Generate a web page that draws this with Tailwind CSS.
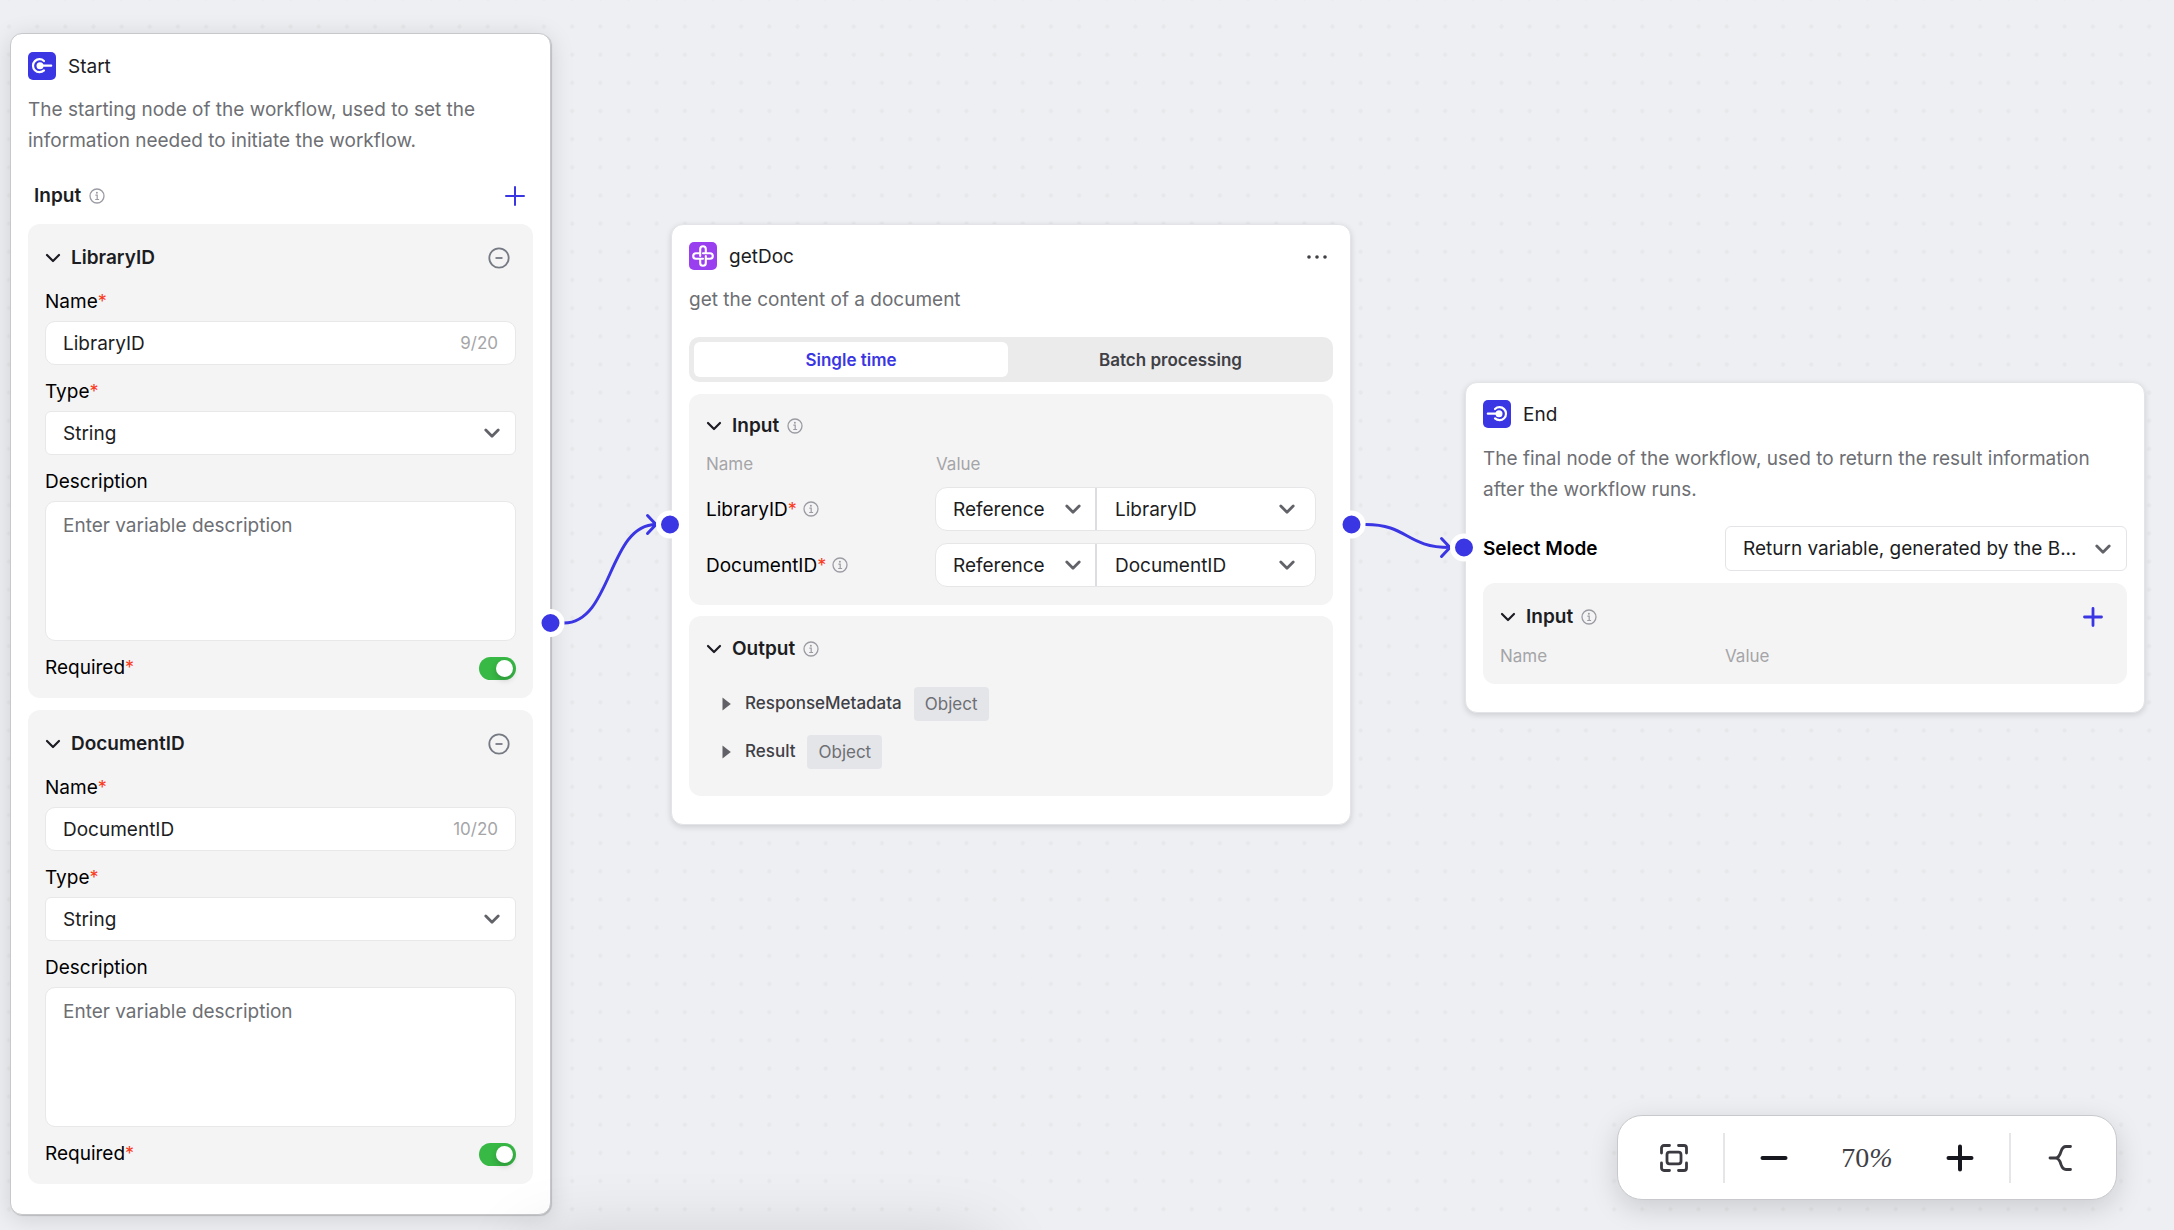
<!DOCTYPE html>
<html lang="en">
<head>
<meta charset="utf-8">
<meta name="viewport" content="width=device-width, initial-scale=1">
<title>Workflow editor</title>
<script src="https://cdn.jsdelivr.net/npm/@tailwindcss/browser@4"></script>
</head>
<body class="bg-[#eeeff3] font-['Inter',sans-serif] text-[19px] text-[#1c1d23]">

<svg class="hidden" aria-hidden="true">
  <symbol id="info" viewBox="0 0 16 16"><circle cx="8" cy="8" r="7" fill="none" stroke="#9b9ca3" stroke-width="1.3"/><circle cx="7.9" cy="4.8" r="1" fill="#9b9ca3"/><path d="M6.4 7.2h1.8v4.2M6.2 11.5h3.9" fill="none" stroke="#9b9ca3" stroke-width="1.2"/></symbol>
  <symbol id="fold" viewBox="0 0 16 16"><path d="M2 5l6 6 6-6" fill="none" stroke="#1c1d23" stroke-width="2.2" stroke-linecap="round" stroke-linejoin="round"/></symbol>
  <symbol id="caret" viewBox="0 0 16 16"><path d="M1.8 5L8 11.2 14.2 5" fill="none" stroke="#626368" stroke-width="2.8" stroke-linecap="round" stroke-linejoin="round"/></symbol>
  <symbol id="remove" viewBox="0 0 22 22"><circle cx="11" cy="11" r="9.7" fill="none" stroke="#757a83" stroke-width="1.8"/><path d="M7.5 11h7" stroke="#757a83" stroke-width="1.8"/></symbol>
  <symbol id="play" viewBox="0 0 9 14"><path d="M.5.5L8.8 7 .5 13.500z" fill="#606166"/></symbol>
  <symbol id="dot" viewBox="0 0 28 28"><path d="M16 9a6.500 6.500 0 1 0 0 9.400M12 13.700h11.200" fill="none" stroke="#fff" stroke-width="2.200" stroke-linecap="round"/><circle cx="12" cy="13.700" r="3.500" fill="#fff"/></symbol>
</svg>

<main class="relative h-screen w-full overflow-hidden">
  <!-- dotted grid: 40-unit pitch at the canvas zoom -->
  <svg class="absolute inset-0 size-full" aria-hidden="true">
    <defs><pattern id="grid" width="40" height="40" patternUnits="userSpaceOnUse" patternTransform="translate(9 26.5) scale(.704) translate(-20 -20)"><circle cx="20" cy="20" r="3" fill="#e7e8ea"/></pattern></defs>
    <rect width="100%" height="100%" fill="url(#grid)"/>
  </svg>

  <!-- Start node -->
  <section class="absolute left-[10px] top-[33px] w-[541px] rounded-xl border border-[#c6c8cc] bg-white px-[17px] pt-[18px] pb-[30px] shadow-[0_4px_24px_rgba(0,0,0,0.13),1px_1px_1px_rgba(0,0,0,0.16)]">
    <header class="flex h-7 items-center gap-3">
      <svg class="size-7 rounded-[5px] bg-[#3b36e3]" aria-hidden="true"><use href="#dot"/></svg>
      <h2 class="pt-0.5">Start</h2>
    </header>
    <p class="mt-3.5 leading-[31px] text-[#6e6f74]">The starting node of the workflow, used to set the information needed to initiate the workflow.</p>
    <div class="mt-[22px] mb-[10px] flex h-9 items-center gap-2 pr-2 pl-1.5">
      <h3 class="font-semibold">Input</h3>
      <svg class="size-4" aria-hidden="true"><use href="#info"/></svg>
      <button class="ml-auto" aria-label="Add input"><svg class="size-5" viewBox="0 0 20 20" aria-hidden="true"><path d="M10 1v18M1 10h18" stroke="#3b36e3" stroke-width="2" stroke-linecap="round"/></svg></button>
    </div>

    <div class="rounded-xl bg-[#f4f4f5] px-[17px] pt-4 pb-3">
      <div class="flex h-9 items-center">
        <button class="flex items-center gap-[10px] font-semibold" aria-expanded="true"><svg class="size-4" aria-hidden="true"><use href="#fold"/></svg>LibraryID</button>
        <button class="mr-1.5 ml-auto" aria-label="Remove LibraryID"><svg class="size-[22px]" aria-hidden="true"><use href="#remove"/></svg></button>
      </div>
      <label for="name1" class="mt-2 block leading-9 text-black">Name<span class="text-[18px] text-[#f93920]">*</span></label>
      <div class="mt-px flex h-11 items-center rounded-[10px] border border-[#e8e8ea] bg-white px-[17px]">
        <input id="name1" type="text" value="LibraryID" class="min-w-0 flex-1 pt-0.5 outline-none">
        <span class="pt-0.5 text-[17px] text-[#a5a5a8]">9/20</span>
      </div>
      <label for="type1" class="mt-[9px] block leading-9 text-black">Type<span class="text-[18px] text-[#f93920]">*</span></label>
      <div class="relative mt-px">
        <select id="type1" class="h-11 w-full appearance-none rounded-md border border-[#e8e8ea] bg-white px-[17px] pt-0.5"><option>String</option></select>
        <svg class="pointer-events-none absolute top-3.5 right-4 size-4" aria-hidden="true"><use href="#caret"/></svg>
      </div>
      <label for="desc1" class="mt-[9px] block leading-9 text-black">Description</label>
      <textarea id="desc1" placeholder="Enter variable description" class="mt-px block h-[140px] w-full resize-none rounded-[10px] border border-[#e8e8ea] bg-white px-[17px] py-[9px] leading-[30px] placeholder:text-[#6e6f74]"></textarea>
      <div class="mt-[9px] flex h-9 items-center justify-between">
        <label for="req1" class="text-black">Required<span class="text-[18px] text-[#f93920]">*</span></label>
        <input id="req1" type="checkbox" role="switch" checked class="flex h-[23px] w-[37px] appearance-none items-center rounded-full bg-[#38b845] px-[3px] before:size-[17px] before:rounded-full before:bg-white before:shadow-[0_3px_6px_rgba(0,0,0,0.2)] checked:justify-end">
      </div>
    </div>

    <div class="mt-3 rounded-xl bg-[#f4f4f5] px-[17px] pt-4 pb-3">
      <div class="flex h-9 items-center">
        <button class="flex items-center gap-[10px] font-semibold" aria-expanded="true"><svg class="size-4" aria-hidden="true"><use href="#fold"/></svg>DocumentID</button>
        <button class="mr-1.5 ml-auto" aria-label="Remove DocumentID"><svg class="size-[22px]" aria-hidden="true"><use href="#remove"/></svg></button>
      </div>
      <label for="name2" class="mt-2 block leading-9 text-black">Name<span class="text-[18px] text-[#f93920]">*</span></label>
      <div class="mt-px flex h-11 items-center rounded-[10px] border border-[#e8e8ea] bg-white px-[17px]">
        <input id="name2" type="text" value="DocumentID" class="min-w-0 flex-1 pt-0.5 outline-none">
        <span class="pt-0.5 text-[17px] text-[#a5a5a8]">10/20</span>
      </div>
      <label for="type2" class="mt-[9px] block leading-9 text-black">Type<span class="text-[18px] text-[#f93920]">*</span></label>
      <div class="relative mt-px">
        <select id="type2" class="h-11 w-full appearance-none rounded-md border border-[#e8e8ea] bg-white px-[17px] pt-0.5"><option>String</option></select>
        <svg class="pointer-events-none absolute top-3.5 right-4 size-4" aria-hidden="true"><use href="#caret"/></svg>
      </div>
      <label for="desc2" class="mt-[9px] block leading-9 text-black">Description</label>
      <textarea id="desc2" placeholder="Enter variable description" class="mt-px block h-[140px] w-full resize-none rounded-[10px] border border-[#e8e8ea] bg-white px-[17px] py-[9px] leading-[30px] placeholder:text-[#6e6f74]"></textarea>
      <div class="mt-[9px] flex h-9 items-center justify-between">
        <label for="req2" class="text-black">Required<span class="text-[18px] text-[#f93920]">*</span></label>
        <input id="req2" type="checkbox" role="switch" checked class="flex h-[23px] w-[37px] appearance-none items-center rounded-full bg-[#38b845] px-[3px] before:size-[17px] before:rounded-full before:bg-white before:shadow-[0_3px_6px_rgba(0,0,0,0.2)] checked:justify-end">
      </div>
    </div>
  </section>

  <!-- getDoc node -->
  <section class="absolute left-[671px] top-[224px] w-[680px] rounded-xl border border-[#e3e4e7] bg-white px-[17px] pt-[17px] pb-[28px] shadow-[0_2px_6px_rgba(0,0,0,0.14)]">
    <header class="flex h-7 items-center gap-3">
      <svg class="size-7 rounded-[5px] bg-[#9a3ff0]" viewBox="0 0 28 28" aria-hidden="true">
        <g fill="none" stroke="#fff" stroke-width="2.1" stroke-linecap="round">
          <path d="M14 11.200H21a2.800 2.800 0 0 1 0 5.600H17.500"/>
          <path d="M14 11.200H21a2.800 2.800 0 0 1 0 5.600H17.500" transform="rotate(90 14 14)"/>
          <path d="M14 11.200H21a2.800 2.800 0 0 1 0 5.600H17.500" transform="rotate(180 14 14)"/>
          <path d="M14 11.200H21a2.800 2.800 0 0 1 0 5.600H17.500" transform="rotate(270 14 14)"/>
        </g>
      </svg>
      <h2 class="pt-0.5">getDoc</h2>
      <button class="mr-1.5 ml-auto pt-0.5" aria-label="More"><svg class="h-4 w-5" viewBox="0 0 20 16" fill="#3f4045" aria-hidden="true"><circle cx="2" cy="8" r="1.8"/><circle cx="10" cy="8" r="1.8"/><circle cx="18" cy="8" r="1.8"/></svg></button>
    </header>
    <p class="mt-3.5 leading-[31px] text-[#6e6f74]">get the content of a document</p>
    <div role="tablist" class="mt-[22px] flex h-[45px] rounded-[10px] bg-[#ebebec] py-[5px] pl-[5px] text-[17px] font-semibold">
      <button role="tab" aria-selected="true" class="w-[314px] rounded-md bg-white pt-0.5 text-[#3b36e3]">Single time</button>
      <button role="tab" aria-selected="false" class="flex-1 pt-0.5 text-[#3f4045]">Batch processing</button>
    </div>

    <div class="mt-3 rounded-xl bg-[#f4f4f5] px-[17px] pt-3.5 pb-[18px]">
      <div class="flex h-9 items-center gap-2">
        <button class="flex items-center gap-[10px] font-semibold" aria-expanded="true"><svg class="size-4" aria-hidden="true"><use href="#fold"/></svg>Input</button>
        <svg class="size-4" aria-hidden="true"><use href="#info"/></svg>
      </div>
      <div class="mt-[5px] mb-2 grid grid-cols-[230px_1fr] text-[17px] leading-[30px] text-[#a5a5a8]"><span>Name</span><span>Value</span></div>
      <div class="grid grid-cols-[229px_1fr] items-center gap-y-3">
        <div class="flex items-center gap-1.5"><label for="val1" class="pt-0.5 text-black">LibraryID<span class="text-[18px] text-[#f93920]">*</span></label><svg class="size-4" aria-hidden="true"><use href="#info"/></svg></div>
        <div class="flex h-11 rounded-xl border border-[#e6e6e8] bg-white">
          <div class="relative w-[161px] border-r-2 border-[#dcdde0]">
            <select aria-label="LibraryID source" class="h-full w-full appearance-none pt-0.5 pl-[17px]"><option>Reference</option></select>
            <svg class="pointer-events-none absolute top-[13px] right-3.5 size-4" aria-hidden="true"><use href="#caret"/></svg>
          </div>
          <div class="relative flex-1">
            <select id="val1" class="h-full w-full appearance-none pt-0.5 pl-[18px]"><option>LibraryID</option></select>
            <svg class="pointer-events-none absolute top-[13px] right-5 size-4" aria-hidden="true"><use href="#caret"/></svg>
          </div>
        </div>
        <div class="flex items-center gap-1.5"><label for="val2" class="pt-0.5 text-black">DocumentID<span class="text-[18px] text-[#f93920]">*</span></label><svg class="size-4" aria-hidden="true"><use href="#info"/></svg></div>
        <div class="flex h-11 rounded-xl border border-[#e6e6e8] bg-white">
          <div class="relative w-[161px] border-r-2 border-[#dcdde0]">
            <select aria-label="DocumentID source" class="h-full w-full appearance-none pt-0.5 pl-[17px]"><option>Reference</option></select>
            <svg class="pointer-events-none absolute top-[13px] right-3.5 size-4" aria-hidden="true"><use href="#caret"/></svg>
          </div>
          <div class="relative flex-1">
            <select id="val2" class="h-full w-full appearance-none pt-0.5 pl-[18px]"><option>DocumentID</option></select>
            <svg class="pointer-events-none absolute top-[13px] right-5 size-4" aria-hidden="true"><use href="#caret"/></svg>
          </div>
        </div>
      </div>
    </div>

    <div class="mt-[11px] rounded-xl bg-[#f4f4f5] px-[17px] pt-[15px] pb-[27px]">
      <div class="flex h-9 items-center gap-2">
        <button class="flex items-center gap-[10px] font-semibold" aria-expanded="true"><svg class="size-4" aria-hidden="true"><use href="#fold"/></svg>Output</button>
        <svg class="size-4" aria-hidden="true"><use href="#info"/></svg>
      </div>
      <ul class="mt-5 flex flex-col gap-3.5 pl-4 text-[17px]">
        <li class="flex h-[34px] items-center gap-3">
          <button class="flex items-center gap-3.5 font-medium text-[#3f4045]" aria-expanded="false"><svg class="h-3.5 w-[9px]" aria-hidden="true"><use href="#play"/></svg>ResponseMetadata</button>
          <span class="rounded bg-[#e4e5e9] px-[11px] leading-[34px] text-[#6e6f74]">Object</span>
        </li>
        <li class="flex h-[34px] items-center gap-3">
          <button class="flex items-center gap-3.5 font-medium text-[#3f4045]" aria-expanded="false"><svg class="h-3.5 w-[9px]" aria-hidden="true"><use href="#play"/></svg>Result</button>
          <span class="rounded bg-[#e4e5e9] px-[11px] leading-[34px] text-[#6e6f74]">Object</span>
        </li>
      </ul>
    </div>
  </section>

  <!-- End node -->
  <section class="absolute left-[1465px] top-[382px] w-[680px] rounded-xl border border-[#e3e4e7] bg-white px-[17px] pt-[17px] pb-[28px] shadow-[0_2px_6px_rgba(0,0,0,0.14)]">
    <header class="flex h-7 items-center gap-3">
      <svg class="size-7 rounded-[5px] bg-[#3b36e3]" viewBox="0 0 28 28" aria-hidden="true"><use href="#dot" width="28" height="28" transform="translate(28) scale(-1 1)"/></svg>
      <h2 class="pt-0.5">End</h2>
    </header>
    <p class="mt-[15px] leading-[31px] text-[#6e6f74]">The final node of the workflow, used to return the result information after the workflow runs.</p>
    <div class="mt-[21px] grid grid-cols-[242px_1fr] items-center">
      <label for="mode" class="pt-0.5 font-semibold text-black">Select Mode</label>
      <div class="relative">
        <select id="mode" class="h-[45px] w-full appearance-none rounded-md border border-[#e3e4e7] bg-white pt-0.5 pl-[17px]"><option>Return variable, generated by the B...</option></select>
        <svg class="pointer-events-none absolute top-[15px] right-4 size-4" aria-hidden="true"><use href="#caret"/></svg>
      </div>
    </div>
    <div class="mt-3 rounded-xl bg-[#f4f4f5] px-[17px] pt-4 pb-[13px]">
      <div class="flex h-9 items-center gap-2">
        <button class="flex items-center gap-[10px] font-semibold" aria-expanded="true"><svg class="size-4" aria-hidden="true"><use href="#fold"/></svg>Input</button>
        <svg class="size-4" aria-hidden="true"><use href="#info"/></svg>
        <button class="mr-[7px] ml-auto" aria-label="Add output"><svg class="size-5" viewBox="0 0 20 20" aria-hidden="true"><path d="M10 1.500v17M1.500 10h17" stroke="#3b36e3" stroke-width="2.800" stroke-linecap="round"/></svg></button>
      </div>
      <div class="mt-1.5 grid grid-cols-[225px_1fr] text-[17px] leading-[30px] text-[#a5a5a8]"><span>Name</span><span>Value</span></div>
    </div>
  </section>

  <!-- edges and ports -->
  <svg class="pointer-events-none absolute inset-0 size-full" aria-hidden="true">
    <g fill="none" stroke="#3b36e3" stroke-width="3" stroke-linecap="round" stroke-linejoin="round">
      <path d="M564 623C612 623 608 524.500 656 524.500M647.500 515.500L656 524.500 647.500 533.500"/>
      <path d="M1366 524.500C1408 524.500 1406 547.500 1450 547.500M1441.500 538.500L1450 547.500 1441.500 556.500"/>
    </g>
    <g fill="#3b36e3" stroke="#fff" stroke-width="5">
      <circle cx="550.500" cy="623" r="11.500"/><circle cx="670" cy="524.500" r="11.500"/><circle cx="1351.500" cy="524.500" r="11.500"/><circle cx="1464" cy="547.500" r="11.500"/>
    </g>
  </svg>

  <!-- run bar parked just below the window; only its shadow shows -->
  <div class="absolute top-full left-[530px] mt-3 h-16 w-[460px] rounded-2xl shadow-[0_0_72px_rgba(0,0,0,0.16)]"></div>

  <!-- zoom controls -->
  <div class="absolute right-[57px] bottom-[30px] flex h-[85px] w-[500px] items-center rounded-[25px] border border-[#c8c9cd] bg-white shadow-[0_8px_28px_rgba(0,0,0,0.15)]">
    <button class="flex w-[105px] justify-center pl-1.5" aria-label="Fit view"><svg class="size-7" viewBox="0 0 28 28" fill="none" stroke="#3a3a40" stroke-width="2.800" stroke-linecap="round" stroke-linejoin="round" aria-hidden="true"><path d="M1.500 9V4a2.500 2.500 0 0 1 2.500-2.500H9.500M18.500 1.500H24a2.500 2.500 0 0 1 2.500 2.500V9M26.500 19v5a2.500 2.500 0 0 1-2.500 2.500H18.500M9.500 26.500H4a2.500 2.500 0 0 1-2.500-2.500V19"/><rect x="7" y="8.200" width="14" height="11.600" rx="2.500"/></svg></button>
    <div class="h-[50px] w-0.5 bg-[#e5e6e8]"></div>
    <div class="flex flex-1 items-center justify-between px-[35px]">
      <button aria-label="Zoom out"><svg class="size-7" viewBox="0 0 28 28" aria-hidden="true"><path d="M2.500 14h23" stroke="#17171f" stroke-width="4" stroke-linecap="round"/></svg></button>
      <span class="font-['Liberation_Serif',serif] text-[28px] text-[#3f4045]">70<i>%</i></span>
      <button aria-label="Zoom in"><svg class="size-7" viewBox="0 0 28 28" aria-hidden="true"><path d="M2.500 14h23M14 2.500v23" stroke="#17171f" stroke-width="4" stroke-linecap="round"/></svg></button>
    </div>
    <div class="h-[50px] w-0.5 bg-[#e5e6e8]"></div>
    <button class="flex w-[105px] justify-center pr-2" aria-label="Auto layout"><svg class="size-7" viewBox="0 0 28 28" fill="none" stroke="#3a3a40" stroke-width="2.800" stroke-linecap="round" stroke-linejoin="round" aria-hidden="true"><path d="M4 14h5.500M24.500 2.500H20c-3 0-4 2-5 5-1 3.500-2.500 6.500-5.500 6.500 3 0 4.500 3 5.500 6.500 1 3 2 5 5 5h4.500"/></svg></button>
  </div>
</main>
</body>
</html>
